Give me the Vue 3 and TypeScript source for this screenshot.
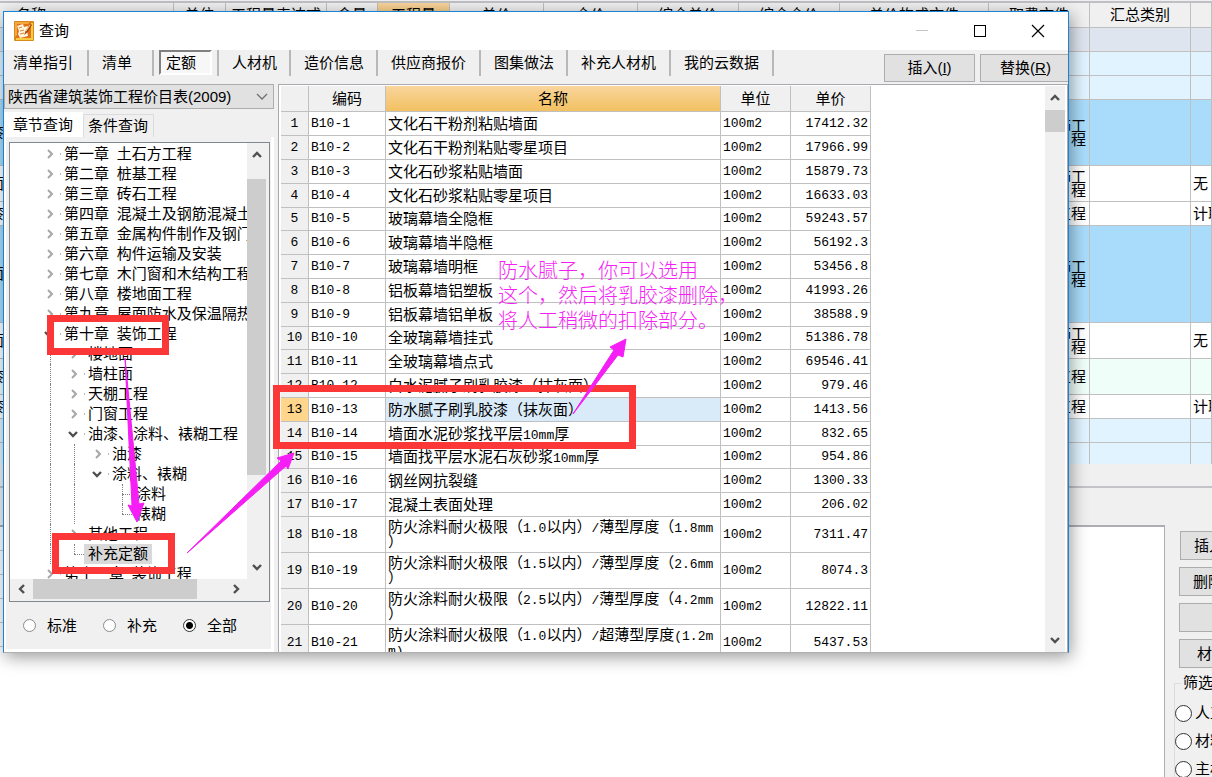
<script setup lang="ts">
import { h, ref } from 'vue'

// Half-width characters are set in a narrower face than the Chinese text around them.
const Mixed = (props: { text: string }) =>
  h(
    'span',
    { class: 'mixed' },
    (props.text.match(/[\x00-\x7f]+|[^\x00-\x7f]+/g) ?? []).map((run) =>
      h('span', { class: run.charCodeAt(0) < 128 ? 'latin' : 'han' }, run),
    ),
  )
Mixed.props = ['text']

const tabs = ['清单指引', '清单', '定额', '人材机', '造价信息', '供应商报价', '图集做法', '补充人材机', '我的云数据']
const activeTab = ref('定额')
const scope = ref('全部')
const catalog = ref('陕西省建筑装饰工程价目表(2009)')
const selected = ref(13)

interface Node {
  text: string
  level: number
  state: 'closed' | 'open' | 'leaf' | 'last'
  guides?: number[]
  picked?: boolean
}
const nodes: Node[] = [
  { text: '第一章 土石方工程', level: 1, state: 'closed' },
  { text: '第二章 桩基工程', level: 1, state: 'closed' },
  { text: '第三章 砖石工程', level: 1, state: 'closed' },
  { text: '第四章 混凝土及钢筋混凝土工程', level: 1, state: 'closed' },
  { text: '第五章 金属构件制作及钢门窗', level: 1, state: 'closed' },
  { text: '第六章 构件运输及安装', level: 1, state: 'closed' },
  { text: '第七章 木门窗和木结构工程', level: 1, state: 'closed' },
  { text: '第八章 楼地面工程', level: 1, state: 'closed' },
  { text: '第九章 屋面防水及保温隔热', level: 1, state: 'closed' },
  { text: '第十章 装饰工程', level: 1, state: 'open' },
  { text: '楼地面', level: 2, state: 'closed', guides: [1] },
  { text: '墙柱面', level: 2, state: 'closed', guides: [1] },
  { text: '天棚工程', level: 2, state: 'closed', guides: [1] },
  { text: '门窗工程', level: 2, state: 'closed', guides: [1] },
  { text: '油漆、涂料、裱糊工程', level: 2, state: 'open', guides: [1] },
  { text: '油漆', level: 3, state: 'closed', guides: [1, 2] },
  { text: '涂料、裱糊', level: 3, state: 'open', guides: [1, 2] },
  { text: '涂料', level: 4, state: 'leaf', guides: [1, 2] },
  { text: '裱糊', level: 4, state: 'last', guides: [1, 2] },
  { text: '其他工程', level: 2, state: 'closed', guides: [1] },
  { text: '补充定额', level: 2, state: 'last', guides: [1], picked: true },
  { text: '第十一章 装饰工程', level: 1, state: 'closed' },
]
const guideX = (level: number) => 16 + 24 * level + 'px'

const items: [string[], string][] = [
  [['文化石干粉剂粘贴墙面'], '17412.32'],
  [['文化石干粉剂粘贴零星项目'], '17966.99'],
  [['文化石砂浆粘贴墙面'], '15879.73'],
  [['文化石砂浆粘贴零星项目'], '16633.03'],
  [['玻璃幕墙全隐框'], '59243.57'],
  [['玻璃幕墙半隐框'], '56192.3'],
  [['玻璃幕墙明框'], '53456.8'],
  [['铝板幕墙铝塑板'], '41993.26'],
  [['铝板幕墙铝单板'], '38588.9'],
  [['全玻璃幕墙挂式'], '51386.78'],
  [['全玻璃幕墙点式'], '69546.41'],
  [['白水泥腻子刷乳胶漆（抹灰面）'], '979.46'],
  [['防水腻子刷乳胶漆（抹灰面）'], '1413.56'],
  [['墙面水泥砂浆找平层10mm厚'], '832.65'],
  [['墙面找平层水泥石灰砂浆10mm厚'], '954.86'],
  [['钢丝网抗裂缝'], '1300.33'],
  [['混凝土表面处理'], '206.02'],
  [['防火涂料耐火极限（1.0以内）/薄型厚度（1.8mm', '）'], '7311.47'],
  [['防火涂料耐火极限（1.5以内）/薄型厚度（2.6mm', '）'], '8074.3'],
  [['防火涂料耐火极限（2.5以内）/薄型厚度（4.2mm', '）'], '12822.11'],
  [['防火涂料耐火极限（1.0以内）/超薄型厚度(1.2m', 'm)'], '5437.53'],
]

const sheetHead = ['名称', '单位', '工程量表达式', '含量', '工程量', '单价', '合价', '综合单价', '综合合价', '单价构成文件', '取费文件', '汇总类别', '']
interface SheetRow { size: string; tone: string; edge?: string; fee?: string[]; last?: string }
const sheetRows: SheetRow[] = [
  { size: 's', tone: 'slate' },
  { size: 's', tone: 'pale' },
  { size: 's', tone: 'pale' },
  { size: 'l', tone: 'blue', edge: '漆', fee: ['饰工', '程'] },
  { size: 'm', tone: 'plain', edge: '面', fee: ['饰工', '程'], last: '无' },
  { size: 's', tone: 'plain', edge: '漆', fee: ['工程'], last: '计取' },
  { size: 'xl', tone: 'blue', edge: '面', fee: ['饰工', '程'] },
  { size: 'm', tone: 'plain', edge: '面', fee: ['饰工', '程'], last: '无' },
  { size: 'm', tone: 'mint', edge: '漆', fee: ['工程'] },
  { size: 's', tone: 'plain', edge: '漆', fee: ['工程'], last: '计取' },
  { size: 's', tone: 'pale' },
  { size: 's', tone: 'pale' },
]
const filters = ['人工', '材料', '主材']
const filter = ref('')
</script>

<template>
  <main class="page">
    <section class="sheet-area">
      <table class="sheet">
        <colgroup>
          <col v-for="(_, i) in sheetHead" :key="i" :class="'c' + i" />
        </colgroup>
        <thead>
          <tr>
            <th v-for="(t, i) in sheetHead" :key="i" :class="{ gold: i === 4, first: i === 0 }">{{ t }}</th>
          </tr>
        </thead>
        <tbody>
          <tr v-for="(r, i) in sheetRows" :key="i" :class="[r.size, r.tone]">
            <td class="edge">{{ r.edge }}</td>
            <td v-for="n in 9" :key="n"></td>
            <td class="fee"><div v-for="f in r.fee" :key="f">{{ f }}</div></td>
            <td></td>
            <td class="last">{{ r.last }}</td>
          </tr>
        </tbody>
      </table>
    </section>
    <section class="lower">
      <div class="list">
        <div v-for="n in 5" :key="n" class="list-line"></div>
      </div>
      <aside class="side">
        <button type="button" class="btn first">插入</button>
        <button type="button" class="btn">删除</button>
        <button type="button" class="btn" aria-label="下移"></button>
        <button type="button" class="btn mat">材料</button>
        <fieldset>
          <legend>筛选</legend>
          <label v-for="f in filters" :key="f"><input v-model="filter" type="radio" name="filter" :value="f" />{{ f }}</label>
        </fieldset>
      </aside>
    </section>

    <section class="dialog" role="dialog" aria-label="查询">
      <header class="title">
        <svg class="logo" viewBox="0 0 20 20" width="20" height="20">
          <rect width="20" height="20" rx="1" fill="#d98a1a" />
          <rect x="1" y="1" width="16" height="16" fill="#e0701c" />
          <path d="M17 2h2v17H2v-2h15z" fill="#f8cb45" />
          <path d="M1 1h15l-2 2H3v11l-2 2z" fill="#f3a73c" />
          <path d="M3 5l6-2 1 3 4-1-1 4 1 6-8 2-2-4 1-3z" fill="#fff4dc" />
          <path d="M5 7l3-1M6 10l4-1M6 13l4-1" stroke="#d68a3c" fill="none" />
          <path d="M17 3l-5 6-2 5 4-3 4-7z" fill="#a94d0c" />
          <path d="M16 4l-4 6" stroke="#ffd890" />
        </svg>
        <h1>查询</h1>
        <button type="button" class="win" aria-label="最小化"><svg width="14" height="14"><path d="M1 6.5h12" stroke="#c4c4c4" /></svg></button>
        <button type="button" class="win" aria-label="最大化"><svg width="14" height="14"><rect x="1.5" y="1.5" width="11" height="11" fill="none" stroke="#000" /></svg></button>
        <button type="button" class="win" aria-label="关闭"><svg width="14" height="14"><path d="M1 1l12 12M13 1L1 13" stroke="#000" stroke-width="1.2" /></svg></button>
      </header>

      <nav class="tools">
        <div v-for="t in tabs" :key="t" class="tool" :class="{ five: t.length === 5 }">
          <button type="button" :class="{ on: t === activeTab }" @click="activeTab = t">{{ t }}</button>
        </div>
        <div class="actions">
          <button type="button" class="btn">插入(<u>I</u>)</button>
          <button type="button" class="btn">替换(<u>R</u>)</button>
        </div>
      </nav>

      <div class="body">
        <aside class="left">
          <div class="combo">
            <select v-model="catalog" aria-label="定额库"><option>陕西省建筑装饰工程价目表(2009)</option></select>
            <svg width="12" height="8"><path d="M1 1l5 5 5-5" fill="none" stroke="#707070" stroke-width="1.3" /></svg>
          </div>
          <div class="pages">
            <button type="button" class="active">章节查询</button>
            <button type="button">条件查询</button>
          </div>
          <div class="sheetpage">
            <div class="treebox">
              <ul class="tree" role="tree">
                <li v-for="(n, i) in nodes" :key="i" role="treeitem">
                  <i v-for="g in n.guides" :key="g" class="guide" :style="{ left: guideX(g) }"></i>
                  <i v-if="n.state === 'leaf' || n.state === 'last'" class="guide" :class="{ half: n.state === 'last' }" :style="{ left: guideX(n.level) }"></i>
                  <span class="node" :style="{ paddingLeft: guideX(n.level) }">
                    <i v-if="n.state === 'leaf' || n.state === 'last'" class="stub"></i>
                    <svg v-else class="mark" width="14" height="12">
                      <path v-if="n.state === 'closed'" d="M-2 2l4 4-4 4" fill="none" stroke="#a6a6a6" stroke-width="2" />
                      <path v-else d="M-5 4l4 4 4-4" fill="none" stroke="#505050" stroke-width="2.4" />
                      <path d="M10 6h1" stroke="#808080" />
                    </svg>
                    <span class="label" :class="{ picked: n.picked }"><Mixed :text="n.text" /></span>
                  </span>
                </li>
              </ul>
              <div class="vbar">
                <button type="button" aria-label="向上"><svg width="12" height="12"><path d="M2 8l4-4 4 4" fill="none" stroke="#505050" stroke-width="2.4" /></svg></button>
                <div class="vthumb tall"></div>
                <button type="button" class="end" aria-label="向下"><svg width="12" height="12"><path d="M2 4l4 4 4-4" fill="none" stroke="#505050" stroke-width="2.4" /></svg></button>
              </div>
              <div class="hbar">
                <button type="button" aria-label="向左"><svg width="12" height="12"><path d="M8 2L4 6l4 4" fill="none" stroke="#505050" stroke-width="2.4" /></svg></button>
                <div class="hthumb"></div>
                <button type="button" class="end" aria-label="向右"><svg width="12" height="12"><path d="M4 2l4 4-4 4" fill="none" stroke="#505050" stroke-width="2.4" /></svg></button>
              </div>
            </div>
            <div class="scopes">
              <label v-for="s in ['标准', '补充', '全部']" :key="s"><input v-model="scope" type="radio" name="scope" :value="s" />{{ s }}</label>
            </div>
          </div>
        </aside>

        <div class="gridbox">
          <div class="gridview">
            <table class="grid">
              <thead>
                <tr><th class="no"></th><th class="code">编码</th><th class="name gold">名称</th><th class="unit">单位</th><th class="price">单价</th></tr>
              </thead>
              <tbody>
                <tr v-for="([name, price], i) in items" :key="i" :class="{ sel: i + 1 === selected, two: name.length > 1 }" @click="selected = i + 1">
                  <th scope="row" class="no">{{ i + 1 }}</th>
                  <td class="latin">B10-{{ i + 1 }}</td>
                  <td class="name"><div v-for="line in name" :key="line"><Mixed :text="line" /></div></td>
                  <td class="latin">100m2</td>
                  <td class="latin money">{{ price }}</td>
                </tr>
              </tbody>
            </table>
          </div>
          <div class="vbar wide">
            <button type="button" aria-label="向上"><svg width="12" height="12"><path d="M2 8l4-4 4 4" fill="none" stroke="#505050" stroke-width="2.4" /></svg></button>
            <div class="vthumb"></div>
            <button type="button" class="end" aria-label="向下"><svg width="12" height="12"><path d="M2 4l4 4 4-4" fill="none" stroke="#505050" stroke-width="2.4" /></svg></button>
          </div>
        </div>
      </div>
    </section>

    <div class="frame chapter"></div>
    <div class="frame extra"></div>
    <div class="frame rows"></div>
    <svg class="arrows" width="700" height="600">
      <g fill="#f51ef5">
        <path d="M125 358L132 506L128 505L137 522L144 503L139 504Z" stroke="#f51ef5" />
        <path d="M187 553L281 461L277 458L294 453L288 469L286 466Z" stroke="#f51ef5" />
        <path d="M573 414L614 350L610 347L626 339L623 357L618 355Z" stroke="#f51ef5" />
      </g>
    </svg>
    <p class="note">防水腻子，你可以选用<br />这个，然后将乳胶漆删除，<br />将人工稍微的扣除部分。</p>
  </main>
</template>

<style>
body { margin: 0; }
.latin { font-family: "Liberation Mono", monospace; font-size: 13px; }
.mixed { white-space: pre; }
.mixed .latin { line-height: 1; }
</style>

<style scoped>
.page {
  position: relative; height: 100vh; overflow: hidden; display: flex; flex-direction: column;
  background: #f0f0f0; color: #000;
  font: 15px/20px "Liberation Sans", "Noto Sans CJK SC", sans-serif;
}
.page * { box-sizing: border-box; }
button, select, input { font: inherit; color: inherit; margin: 0; padding: 0; }
button { border: 0; background: none; white-space: nowrap; }
svg { display: block; flex: none; }
table { border-collapse: separate; border-spacing: 0; table-layout: fixed; }
th { font-weight: 400; padding: 0; }
td { padding: 0; }
.btn { background: #e1e1e1; border: 1px solid #adadad; }

.sheet-area { flex: none; height: 464px; overflow: hidden; border-top: 1px solid #f0f0f0; }
.sheet { width: 100%; border-top: 2px solid #bfbfc4; }
.sheet th, .sheet td { border-right: 1px solid #c0c0c0; border-bottom: 1px solid #c0c0c0; white-space: nowrap; overflow: hidden; }
.sheet th { height: 25px; background: #f0f0f0; }
.sheet th.first { text-align: left; padding-left: 16px; }
.gold, .sheet th.gold { background: linear-gradient(#f9d59d, #f2c161); }
.c0 { width: 174px; } .c1 { width: 52px; } .c2 { width: 101px; } .c3 { width: 51px; } .c4 { width: 72px; }
.c5, .c6 { width: 94px; } .c7, .c8 { width: 101px; } .c9 { width: 149px; } .c10, .c11 { width: 101px; }
.s td { height: 24px; } .m td { height: 36px; } .l td { height: 66px; } .xl td { height: 97px; }
.slate { background: #dfe5ef; } .pale { background: #e0f3ff; } .blue { background: #a9dcfb; }
.plain { background: #fff; } .mint { background: #f0fefa; }
.edge { text-indent: -11px; }
.fee { text-align: right; line-height: 14px; padding-right: 3px; }
.sheet td.last { padding-left: 2px; }

.lower { flex: 1; min-height: 0; display: flex; margin-top: 22px; border-top: 2px solid #c3c3c8; }
.list { flex: 1; margin-top: 37px; background: #fff; border: solid #adadb4; border-width: 2px 1px 0 0; }
.list-line { height: 24px; width: 12px; border-bottom: 1px solid #c8c8c8; }
.side { width: 47px; flex: none; overflow: hidden; padding: 43px 0 0 14px; display: flex; flex-direction: column; align-items: flex-start; gap: 7px; }
.side .btn { width: 90px; height: 29px; flex: none; text-align: left; padding-left: 13px; }
.side .btn.mat { padding-left: 17px; }
.side .btn.first { margin-left: 1px; }
.side fieldset { margin: -2px 0 0 -5px; padding: 6px 0 0; width: 100px; flex: none; height: 160px; border: 1px solid #dcdcdc; }
.side legend { margin-left: 6px; padding: 0 2px; }
.side label { display: flex; align-items: center; gap: 3px; height: 28px; }
.side input { appearance: none; width: 17px; height: 17px; border: 1px solid #333; border-radius: 50%; background: #fff; }

.dialog {
  position: absolute; inset: 11px 143px 124px 3px; display: flex; flex-direction: column;
  background: #f0f0f0; border: 1px solid #1883d7; border-bottom-color: #b0b0b0;
  box-shadow: 2px 4px 16px rgba(0, 0, 0, .4);
}
.title { flex: none; height: 38px; display: flex; align-items: center; background: #fff; padding-left: 10px; }
.title h1 { flex: 1; font-size: 15px; font-weight: 400; margin: 0 0 0 5px; }
.win { width: 58px; height: 38px; display: flex; align-items: center; justify-content: center; }
.title .win:last-child { margin-right: 1px; }
.tools { flex: none; height: 34px; display: flex; overflow: hidden; }
.tool { flex: none; height: 26px; min-width: 65px; border-right: 2px solid #b8b8b8; padding: 0 4px 0 6px; display: flex; }
.tool.five { padding-right: 5px; }
.tool:first-child { padding: 0 6px 0 2px; }
.tool button { flex: 1; text-align: left; height: 25px; padding: 0 7px 0 6px; border: 1px solid transparent; }
.tool button.on { border: 2px solid; border-color: #808080 #fff #fff #808080; background: #f7f7f7; padding: 0 12px 0 5px; }
.tool:nth-child(3) { padding: 0 5px; }
.actions { margin-left: auto; margin-right: -3px; padding-top: 4px; display: flex; gap: 5px; }
.actions .btn { width: 91px; height: 28px; }

.body { flex: 1; min-height: 0; display: flex; gap: 4px; }
.left { width: 270px; flex: none; display: flex; flex-direction: column; }
.combo { position: relative; height: 25px; flex: none; }
.combo select { appearance: none; width: 100%; height: 100%; padding-left: 3px; background: #e1e1e1; border: 1px solid #adadad; border-radius: 0; }
.combo svg { position: absolute; right: 6px; top: 9px; pointer-events: none; }
.pages { display: flex; align-items: flex-end; height: 28px; flex: none; }
.pages button { height: 23px; width: 71px; border: 1px solid #dcdcdc; border-bottom: 0; padding-left: 4px; text-align: left; background: #f0f0f0; }
.pages .active { width: 79px; height: 25px; padding-left: 9px; border: 0; background: #fff; }
.sheetpage { flex: 1; min-height: 0; display: flex; flex-direction: column; border: solid #fff; border-width: 0 3px 3px 2px; padding: 5px 1px 0 3px; }
.treebox { flex: 1; min-height: 0; display: grid; grid-template: minmax(0, 1fr) 22px / minmax(0, 1fr) 22px; border: 1px solid #828790; background: #f0f0f0; }
.tree { list-style: none; margin: 0; padding: 1px 0 0; overflow: hidden; background: #fff; }
.tree li { position: relative; height: 20px; }
.node { display: flex; align-items: center; height: 20px; white-space: nowrap; }
.mark { overflow: visible; }
.label { height: 20px; padding: 0 4px 0 0; }
.label.picked { background: #d9d9d9; margin-left: -4px; padding-left: 4px; }
.guide { position: absolute; top: 0; height: 20px; border-left: 1px dotted #808080; }
.guide.half { height: 10px; }
.stub { width: 10px; margin-right: 4px; border-top: 1px dotted #808080; }
.vbar { background: #f0f0f0; display: flex; flex-direction: column; width: 19px; }
.vbar button { height: 24px; display: flex; align-items: center; justify-content: center; flex: none; }
.vbar .end, .hbar .end { margin-top: auto; }
.vthumb { height: 22px; background: #cdcdcd; }
.vthumb.tall { height: 68%; margin-top: 12px; }
.hbar { display: flex; height: 20px; grid-column: 1; }
.hbar button { width: 23px; display: flex; align-items: center; justify-content: center; }
.hbar .end { margin: 0 0 0 auto; }
.hthumb { width: 164px; background: #cdcdcd; }
.scopes { flex: none; height: 47px; display: flex; padding-left: 14px; }
.scopes label { width: 80px; display: flex; align-items: center; gap: 11px; }
.scopes input { appearance: none; width: 13px; height: 13px; border: 1px solid #8c8c8c; border-radius: 50%; background: #fff; }
.scopes input:checked { border-color: #333; background: radial-gradient(#000 0 3px, #fff 4px); }

.gridbox { flex: 1; min-width: 0; display: flex; background: #fff; border: solid #a8a8ae; border-width: 1px 1px 0 1px; padding: 1px 0 0 2px; }
.gridview { flex: 1; min-width: 0; overflow: hidden; }
.grid { width: 590px; }
.grid th, .grid td { border-right: 1px solid #c0c0c0; border-bottom: 1px solid #c0c0c0; height: 24px; line-height: 20px; white-space: nowrap; }
.grid thead th { height: 26px; background: #f0f0f0; }
.grid thead th.gold { background: linear-gradient(#f9d59d, #f2c161); }
.grid .no { width: 28px; background: #f0f0f0; }
.grid tbody .no { font-family: "Liberation Mono", monospace; font-size: 13px; }
.grid .code { width: 77px; } .grid thead .name { width: 335px; } .grid .unit { width: 70px; } .grid .price { width: 80px; }
.grid td { padding-left: 2px; }
.grid tbody tr:nth-child(5n) > * { height: 23px; }
.grid tbody tr.two > * { height: 36px; }
.grid .two .name { line-height: 14px; }
.grid td.money { text-align: right; padding: 0 2px 0 0; }
.grid .sel .no { background: #ffd68c; }
.grid .sel .name { background: #d9eaf8; }
.vbar.wide { width: 20px; margin-right: 2px; flex: none; }

.frame { position: absolute; border: 7px solid #fc3737; }
.chapter { left: 47px; top: 315px; width: 122px; height: 40px; }
.extra { left: 52px; top: 533px; width: 123px; height: 41px; }
.rows { left: 273px; top: 385px; width: 363px; height: 64px; }
.arrows { position: absolute; left: 0; top: 0; pointer-events: none; }
.note { position: absolute; left: 498px; top: 259px; margin: 0; font-size: 20px; line-height: 25px; font-weight: 300; color: #f51ef5; white-space: nowrap; }
</style>
